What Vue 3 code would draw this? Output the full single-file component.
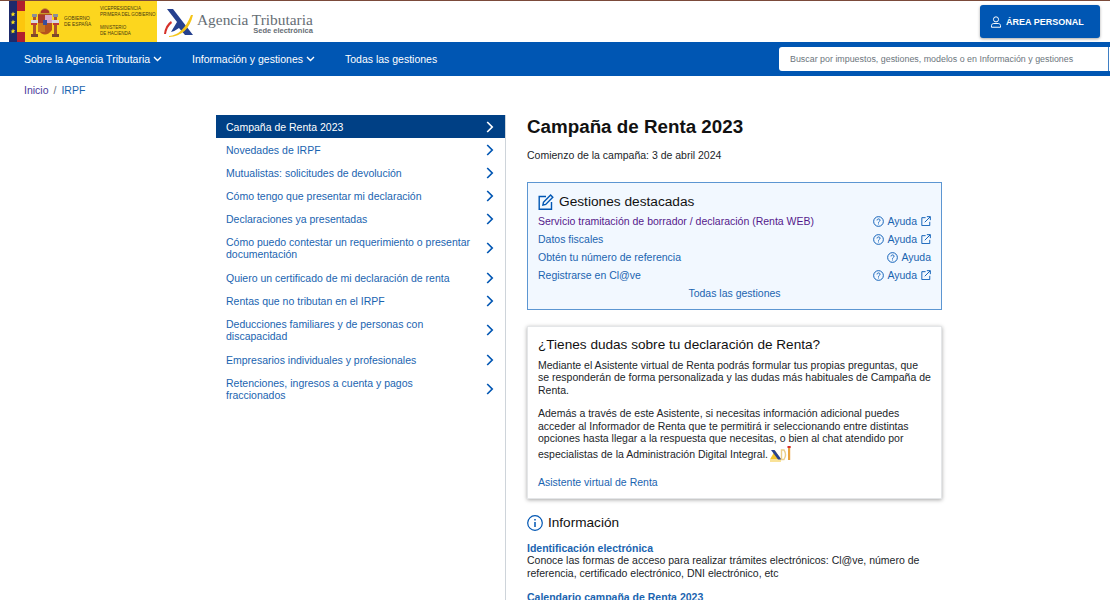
<template>
  <div class="page">
    <header class="top">
      <div class="logos">
        <div class="flag">
          <svg width="16" height="41" viewBox="0 0 16 41">
            <rect width="8" height="41" fill="#1d2a6b" />
            <rect x="8" width="8" height="41" fill="#fcc60e" />
            <rect x="8" width="8" height="10" fill="#b01f2e" />
            <rect x="8" y="31" width="8" height="10" fill="#b01f2e" />
            <path v-for="y in [13, 21, 30]" :key="y" :transform="`translate(4 ${y})`" d="M0-2.400l.7 1.600 1.700.1-1.300 1.100.4 1.700L0 1.600l-1.500.9.4-1.700-1.300-1.100 1.700-.1z" fill="#f6e01c" />
          </svg>
        </div>
        <div class="gov">
          <svg class="shield" width="28" height="32" viewBox="0 0 28 32">
            <rect x="2" y="11" width="3" height="17" fill="#a9552e" />
            <rect x="23" y="11" width="3" height="17" fill="#a9552e" />
            <rect x="1" y="8" width="5" height="3" fill="#8b8f96" />
            <rect x="22" y="8" width="5" height="3" fill="#8b8f96" />
            <rect x="0" y="14" width="8" height="3" fill="#d8dadf" />
            <rect x="20" y="14" width="8" height="3" fill="#d8dadf" />
            <rect x="0" y="17" width="6" height="2" fill="#c23b35" />
            <rect x="22" y="17" width="6" height="2" fill="#c23b35" />
            <rect x="0" y="28" width="7" height="3" fill="#7b4a2a" />
            <rect x="21" y="28" width="7" height="3" fill="#7b4a2a" />
            <path d="M9 6q5-8 10 0l1 2H8z" fill="#c79a2a" />
            <path d="M10 5q4-4 8 0l0 2h-8z" fill="#a8352b" />
            <path d="M7 8h14v16q-7 9-14 0z" fill="#b5521f" />
            <rect x="14" y="9" width="7" height="8" fill="#d9a6c8" />
            <rect x="7" y="9" width="7" height="8" fill="#a83a2c" />
            <rect x="7" y="17" width="7" height="9" fill="#c9781f" />
            <rect x="12" y="14" width="4" height="5" fill="#3a4f9c" />
          </svg>
          <div class="gov-name">GOBIERNO<br />DE ESPAÑA</div>
          <div class="gov-side">
            <div>VICEPRESIDENCIA<br />PRIMERA DEL GOBIERNO</div>
            <div>MINISTERIO<br />DE HACIENDA</div>
          </div>
        </div>
        <svg class="aeat" width="31" height="29" viewBox="0 0 31 29">
          <path d="M4 1h6l20 26h-8l-6-7q-4 3-8 4l6-10z" fill="#26418f" />
          <path d="M8 13Q2 17 1 26h2Q4 19 9 15z" fill="#d6312a" />
          <path d="M6 28Q20 27 28 7l2 0Q25 28 6 29z" fill="#f5c518" />
        </svg>
        <div class="brand">
          <span class="brand-name">Agencia Tributaria</span>
          <span class="brand-sub">Sede electrónica</span>
        </div>
      </div>
      <a class="personal">
        <svg width="12" height="12" viewBox="0 0 16 16" fill="none" stroke="#fff" stroke-width="1.300">
          <circle cx="8" cy="4.500" r="3.400" />
          <path d="M2 15v-2.200c0-1.600 1.400-2.800 3-2.800h6c1.600 0 3 1.200 3 2.800V15z" />
        </svg>
        ÁREA PERSONAL
      </a>
    </header>

    <nav class="nav">
      <a v-for="item in navItems" :key="item.label" class="nav-item">
        {{ item.label }}
        <svg v-if="item.caret" width="9" height="6" viewBox="0 0 9 6" fill="none" stroke="#fff" stroke-width="1.400">
          <path d="M1 1l3.500 3.500L8 1" />
        </svg>
      </a>
      <div class="search">
        <span>Buscar por impuestos, gestiones, modelos o en Información y gestiones</span>
        <i class="search-end"></i>
      </div>
    </nav>

    <div class="crumbs">
      <a class="visited">Inicio</a>
      <span class="sep">/</span>
      <a>IRPF</a>
    </div>

    <div class="content">
      <aside class="side">
        <a v-for="(item, i) in sideItems" :key="item" class="side-item" :class="{ active: i === 0, tall: item.length > 48 }">
          <span>{{ item }}</span>
          <svg width="8" height="12" viewBox="0 0 8 12" fill="none" stroke="currentColor" stroke-width="1.700">
            <path d="M1.200 1l5 5-5 5" />
          </svg>
        </a>
      </aside>

      <main class="main">
        <h1>Campaña de Renta 2023</h1>
        <p class="start">Comienzo de la campaña: 3 de abril 2024</p>

        <section class="featured">
          <h2>
            <svg width="16" height="16" viewBox="0 0 16 16" fill="none" stroke="#0056b3" stroke-width="1.400">
              <path d="M8 2.500H1.200v12.800h12.300V8" />
              <path d="M5.500 8.200L12.600 1l2.200 2.200-7.100 7.200-2.800.6z" />
            </svg>
            Gestiones destacadas
          </h2>
          <div v-for="row in gestiones" :key="row.label" class="g-row">
            <a :class="{ visited: row.visited }">{{ row.label }}</a>
            <span class="help">
              <svg width="11" height="11" viewBox="0 0 12 12" fill="none" stroke="#0056b3">
                <circle cx="6" cy="6" r="5.300" />
                <path d="M4.400 4.800c0-2.100 3.300-2.100 3.300-.1 0 1.200-1.700 1.200-1.700 2.600" />
                <path d="M6 8.200v1" />
              </svg>
              Ayuda
              <svg v-if="row.external" class="ext" width="10" height="10" viewBox="0 0 12 12" fill="none" stroke="#0056b3" stroke-width="1.100">
                <path d="M5.500 2H1v9.500h9.500V7" />
                <path d="M4.500 7.500L11 1M7 .8h4.200V5" />
              </svg>
            </span>
          </div>
          <a class="all">Todas las gestiones</a>
        </section>

        <section class="doubts">
          <h2>¿Tienes dudas sobre tu declaración de Renta?</h2>
          <p>Mediante el Asistente virtual de Renta podrás formular tus propias preguntas, que se responderán de forma personalizada y las dudas más habituales de Campaña de Renta.</p>
          <p>Además a través de este Asistente, si necesitas información adicional puedes acceder al Informador de Renta que te permitirá ir seleccionando entre distintas opciones hasta llegar a la respuesta que necesitas, o bien al chat atendido por especialistas de la Administración Digital Integral.
            <svg class="adi" width="22" height="18" viewBox="0 0 22 18">
              <path d="M0 15.500l5-9 6 9z" fill="#f3c531" />
              <path d="M1 6h3.500l7 9.500H8z" fill="#26418f" />
              <path d="M0 16.500h11v1H0z" fill="#f3c531" />
              <path d="M11.500 6h2.500q3 4.700 0 9.500h-2.500z" fill="none" stroke="#eccf8b" stroke-width="1.400" />
              <rect x="18" y="4" width="2.200" height="12" fill="#e8a23d" />
              <rect x="17.500" y="2" width="3.200" height="2" fill="#d6312a" />
            </svg>
          </p>
          <a class="assistant">Asistente virtual de Renta</a>
        </section>

        <h2 class="info-title">
          <svg width="16" height="16" viewBox="0 0 16 16" fill="none" stroke="#0056b3" stroke-width="1.200">
            <circle cx="8" cy="8" r="7.300" />
            <path d="M8 7v5M8 4v1.400" stroke-width="1.500" />
          </svg>
          Información
        </h2>
        <div class="info">
          <a>Identificación electrónica</a>
          <p>Conoce las formas de acceso para realizar trámites electrónicos: Cl@ve, número de referencia, certificado electrónico, DNI electrónico, etc</p>
        </div>
        <div class="info">
          <a>Calendario campaña de Renta 2023</a>
        </div>
      </main>
    </div>
  </div>
</template>

<script setup>
const navItems = [
  { label: 'Sobre la Agencia Tributaria', caret: true },
  { label: 'Información y gestiones', caret: true },
  { label: 'Todas las gestiones', caret: false }
]

const sideItems = [
  'Campaña de Renta 2023',
  'Novedades de IRPF',
  'Mutualistas: solicitudes de devolución',
  'Cómo tengo que presentar mi declaración',
  'Declaraciones ya presentadas',
  'Cómo puedo contestar un requerimiento o presentar documentación',
  'Quiero un certificado de mi declaración de renta',
  'Rentas que no tributan en el IRPF',
  'Deducciones familiares y de personas con discapacidad',
  'Empresarios individuales y profesionales',
  'Retenciones, ingresos a cuenta y pagos fraccionados'
]

const gestiones = [
  { label: 'Servicio tramitación de borrador / declaración (Renta WEB)', visited: true, external: true },
  { label: 'Datos fiscales', external: true },
  { label: 'Obtén tu número de referencia', external: false },
  { label: 'Registrarse en Cl@ve', external: true }
]
</script>

<style>
html,
body {
  overflow: hidden;
}
</style>

<style scoped>
.page {
  height: 600px;
  overflow: hidden;
  background: #fff;
  color: #212529;
  font-family: "Liberation Sans", Arial, sans-serif;
  font-size: 10.500px;
  line-height: 12px;
}

a {
  color: #1a64b0;
}

a.visited {
  color: #551a8b;
}

.top {
  height: 42px;
  box-sizing: border-box;
  border-top: 1px solid #7b4a3a;
  display: flex;
  justify-content: space-between;
  align-items: flex-start;
}

.logos {
  display: flex;
  align-items: flex-start;
  padding-left: 9px;
}

.flag {
  height: 41px;
  line-height: 0;
}

.gov {
  width: 132px;
  height: 41px;
  background: #fcd61e;
  display: flex;
  align-items: center;
  color: #4a3a10;
  font-size: 4.800px;
  line-height: 6px;
}

.shield {
  margin-left: 6px;
  flex: none;
}

.gov-name {
  margin-left: 5px;
  width: 36px;
  flex: none;
}

.gov-side {
  height: 31px;
  display: flex;
  flex-direction: column;
  justify-content: space-between;
  font-size: 4.500px;
  white-space: nowrap;
}

.aeat {
  margin: 7px 0 0 6px;
}

.brand {
  margin: 11px 0 0 3px;
  display: flex;
  flex-direction: column;
  align-items: flex-end;
  color: #666e75;
}

.brand-name {
  font-family: "Liberation Serif", serif;
  font-size: 15.400px;
  line-height: 15px;
}

.brand-sub {
  font-size: 7.500px;
  line-height: 8px;
  font-weight: 700;
}

.personal {
  width: 120px;
  height: 33px;
  margin: 4px 10px 0 0;
  box-sizing: border-box;
  padding-left: 10px;
  display: flex;
  align-items: center;
  gap: 4px;
  background: #0056b3;
  border-radius: 3px;
  box-shadow: 0 1px 3px rgba(0, 0, 0, 0.35);
  color: #fff;
  font-size: 9px;
  font-weight: 700;
}

.nav {
  height: 34px;
  background: #0056b3;
  display: flex;
  align-items: center;
  padding-left: 24px;
  gap: 30px;
}

.nav-item {
  display: flex;
  align-items: center;
  gap: 3px;
  color: #fff;
  font-size: 10.500px;
}

.search {
  margin-left: auto;
  width: 331px;
  height: 24px;
  box-sizing: border-box;
  padding-left: 11px;
  display: flex;
  align-items: center;
  background: #fff;
  border-radius: 3px 0 0 3px;
  color: #6c757d;
  font-size: 8.900px;
}

.search span {
  flex: 1;
}

.search-end {
  width: 1px;
  height: 24px;
  margin-right: 1px;
  background: #3f7fc4;
}

.crumbs {
  height: 39px;
  box-sizing: border-box;
  padding: 8px 0 0 24px;
  display: flex;
  gap: 5px;
}

.crumbs a.visited {
  color: #4b3a9b;
}

.sep {
  color: #6c757d;
}

.content {
  display: flex;
  align-items: stretch;
  min-height: 485px;
  padding-left: 216px;
}

.side {
  width: 290px;
  box-sizing: border-box;
  border-right: 1px solid #ced4da;
  flex: none;
}

.side-item {
  display: flex;
  align-items: center;
  justify-content: space-between;
  height: 23px;
  box-sizing: border-box;
  padding: 0 11px 0 10px;
  gap: 12px;
  line-height: 12px;
}

.side-item.tall {
  height: 36px;
}

.side-item svg {
  flex: none;
  color: #0056b3;
}

.side-item.active {
  background: #004085;
  color: #fff;
}

.side-item.active svg {
  color: #fff;
}

.main {
  width: 415px;
  margin-left: 21px;
}

h1 {
  margin: 0;
  padding-top: 3px;
  font-size: 18.800px;
  line-height: 18px;
  color: #111;
}

.start {
  margin: 13px 0 0;
  line-height: 12px;
}

.featured {
  margin-top: 21px;
  height: 128px;
  box-sizing: border-box;
  padding: 11px 10px 0;
  border: 1px solid #5c96d2;
  background: #f2f8ff;
  display: flex;
  flex-direction: column;
}

.featured h2 {
  margin: 0 0 2px;
  display: flex;
  align-items: center;
  gap: 5px;
  font-size: 13.700px;
  font-weight: 400;
  line-height: 16px;
  color: #111;
}

.g-row {
  height: 18px;
  display: flex;
  justify-content: space-between;
  align-items: center;
}

.help {
  display: flex;
  align-items: center;
  gap: 3px;
  color: #1a64b0;
}

.ext {
  margin-left: 1px;
}

.all {
  margin-top: 3px;
  text-align: center;
}

.doubts {
  margin-top: 16px;
  height: 173px;
  box-sizing: border-box;
  padding: 11px 10px 0;
  border: 1px solid #e4e6e8;
  box-shadow: 0 1px 4px rgba(0, 0, 0, 0.35);
}

.doubts h2 {
  margin: 0 0 7px;
  font-size: 13.600px;
  font-weight: 400;
  line-height: 14px;
  color: #111;
}

.doubts p {
  margin: 0 0 11px;
  line-height: 12.400px;
}

.adi {
  vertical-align: -4px;
  margin-left: -1px;
}

.assistant {
  display: block;
  margin-top: 14px;
}

.info-title {
  margin: 16px 0 0;
  display: flex;
  align-items: center;
  gap: 5px;
  font-size: 13.600px;
  font-weight: 400;
  line-height: 16px;
  color: #111;
}

.info {
  margin-top: 11px;
}

.info a {
  display: block;
  font-weight: 700;
  line-height: 12px;
}

.info p {
  margin: 0;
  line-height: 13px;
}
</style>
